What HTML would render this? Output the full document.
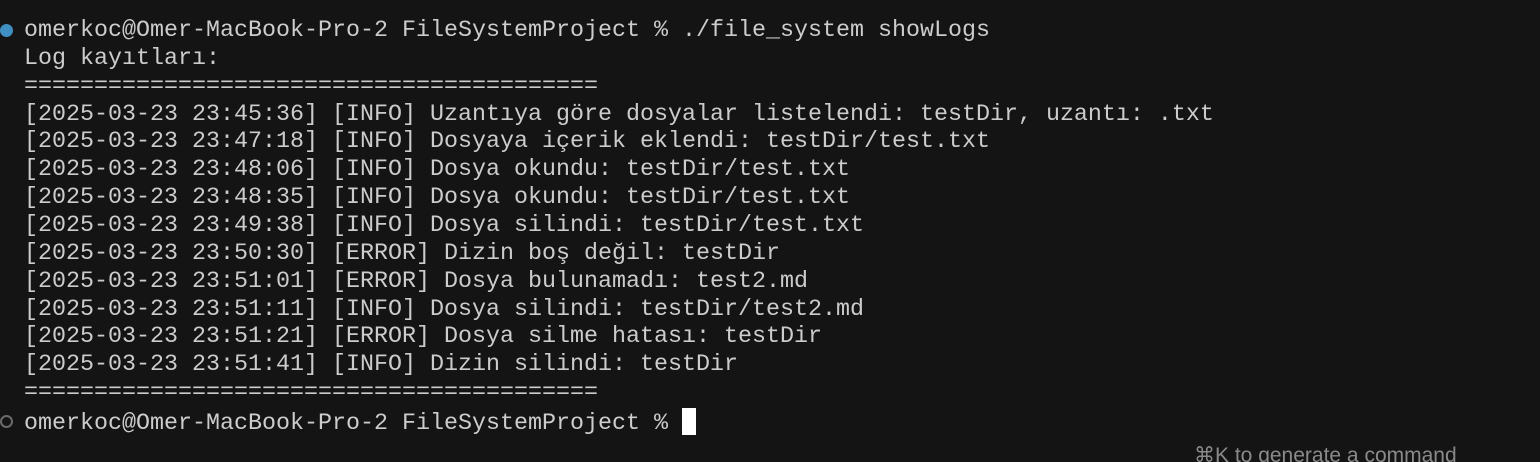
<!DOCTYPE html>
<html><head><meta charset="utf-8"><style>
html,body{margin:0;padding:0;background:#141414;width:1540px;height:462px;overflow:hidden;position:relative}
pre{position:absolute;left:24px;top:18px;margin:0;font-family:"Liberation Mono","DejaVu Sans Mono",monospace;font-size:23.33px;line-height:27.86px;color:#cccccc;white-space:pre}
.dot{position:absolute;left:0px;width:13px;height:13px;border-radius:50%;box-sizing:border-box}
.cur{display:inline-block;width:14px;height:27px;background:#fff;vertical-align:-6px}
.hint{position:absolute;left:1194px;top:443px;font-family:"Liberation Sans",sans-serif;font-size:21px;color:#8a8a8a;white-space:nowrap}
</style></head><body>
<div class="dot" style="top:24px;background:#3f8fc2"></div>
<div class="dot" style="top:415px;border:2px solid #6a6a6a"></div>
<pre>omerkoc@Omer-MacBook-Pro-2 FileSystemProject % ./file_system showLogs
Log kayıtları:
=========================================
[2025-03-23 23:45:36] [INFO] Uzantıya göre dosyalar listelendi: testDir, uzantı: .txt
[2025-03-23 23:47:18] [INFO] Dosyaya içerik eklendi: testDir/test.txt
[2025-03-23 23:48:06] [INFO] Dosya okundu: testDir/test.txt
[2025-03-23 23:48:35] [INFO] Dosya okundu: testDir/test.txt
[2025-03-23 23:49:38] [INFO] Dosya silindi: testDir/test.txt
[2025-03-23 23:50:30] [ERROR] Dizin boş değil: testDir
[2025-03-23 23:51:01] [ERROR] Dosya bulunamadı: test2.md
[2025-03-23 23:51:11] [INFO] Dosya silindi: testDir/test2.md
[2025-03-23 23:51:21] [ERROR] Dosya silme hatası: testDir
[2025-03-23 23:51:41] [INFO] Dizin silindi: testDir
=========================================
omerkoc@Omer-MacBook-Pro-2 FileSystemProject % <span class="cur"></span></pre>
<div class="hint">⌘K to generate a command</div>
</body></html>
